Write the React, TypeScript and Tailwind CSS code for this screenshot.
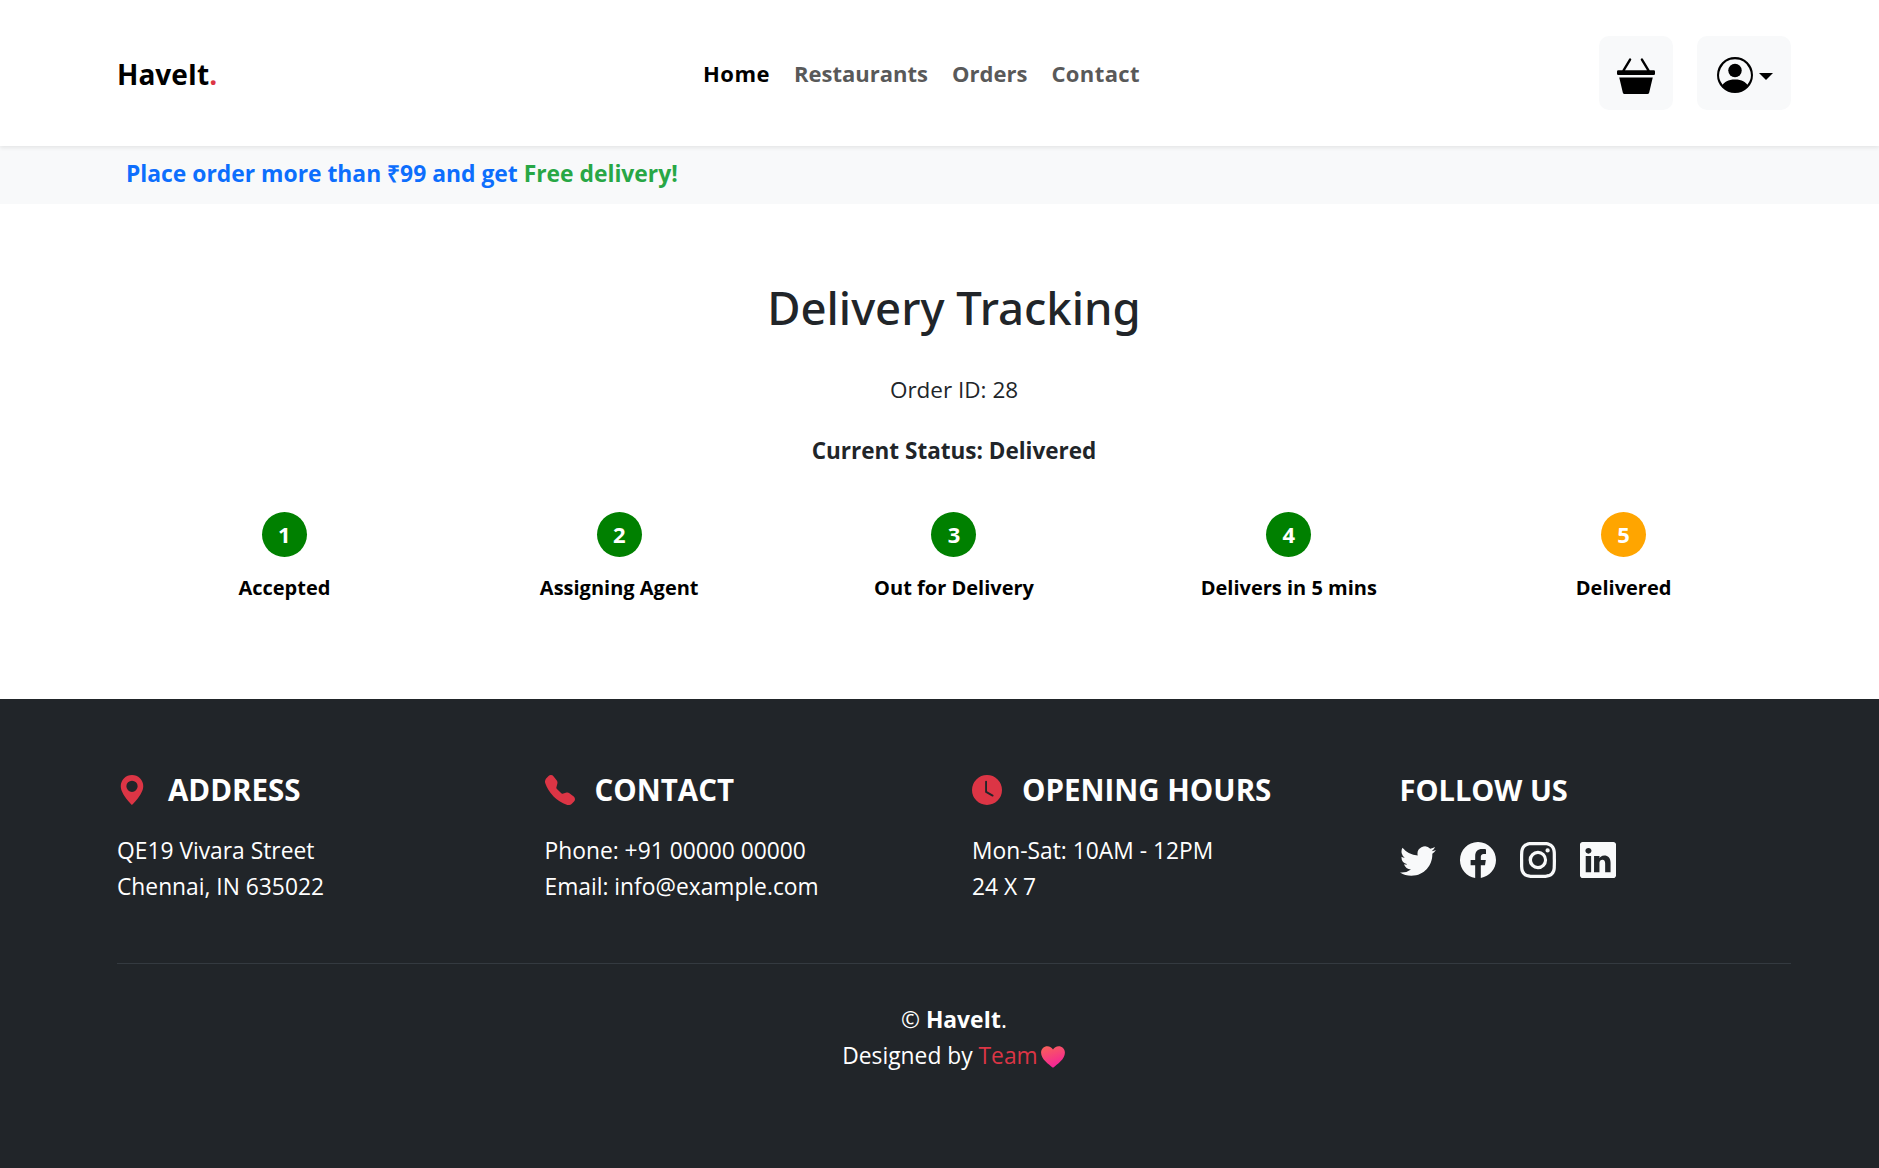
import { BsBasket3Fill, BsPersonCircle, BsGeoAltFill, BsTelephoneFill, BsClockFill, BsTwitter, BsFacebook, BsInstagram, BsLinkedin } from "react-icons/bs";

const steps = [
  { n: 1, label: "Accepted", done: true },
  { n: 2, label: "Assigning Agent", done: true },
  { n: 3, label: "Out for Delivery", done: true },
  { n: 4, label: "Delivers in 5 mins", done: true },
  { n: 5, label: "Delivered", done: false },
];

function Heart() {
  return (
    <svg viewBox="0 0 24 24" className="inline-block w-[26px] h-[26px] align-[-6px] ml-[2px]">
      <defs>
        <linearGradient id="heart" x1="0.2" y1="0" x2="0.6" y2="1">
          <stop offset="0" stopColor="#f8605a" />
          <stop offset="1" stopColor="#f5209a" />
        </linearGradient>
      </defs>
      <path fill="url(#heart)" d="M12 22C8 18.500 1 14 1 8c0-3.600 2.700-6 5.800-6C9 2 11 3.200 12 5c1-1.800 3-3 5.200-3C20.300 2 23 4.400 23 8c0 6-7 10.500-11 14z" />
    </svg>
  );
}

export default function App() {
  return (
    <div className="min-h-[1168px] flex flex-col bg-white font-['Open_Sans',sans-serif] text-[#212529]">
      {/* Navbar */}
      <nav className="h-[146px] pl-[117px] pr-[88px] flex items-center relative z-10 shadow-[0_2px_4px_rgba(0,0,0,0.08)] bg-white">
        <div className="w-[586px] text-[28px] font-bold text-black mt-[2px]">
          HaveIt<span className="text-[#dc3545]">.</span>
        </div>
        <ul className="flex-1 flex gap-[24px] text-[22px] font-bold text-[#595959] mt-[1px]">
          <li className="text-black tracking-[0.5px]">Home</li>
          <li>Restaurants</li>
          <li>Orders</li>
          <li className="tracking-[0.4px]">Contact</li>
        </ul>
        <div className="flex gap-6">
          <button className="w-[74px] h-[74px] rounded-[10px] bg-[#f8f9fa] flex items-center justify-center text-black">
            <BsBasket3Fill size={38} className="mt-[4px]" />
          </button>
          <button className="w-[94px] h-[74px] rounded-[10px] bg-[#f8f9fa] flex items-center justify-center text-black">
            <BsPersonCircle size={36} className="mt-[3px] ml-[1px]" />
            <span className="ml-[6px] mt-[6px] border-t-[7px] border-x-[7px] border-x-transparent border-t-black" />
          </button>
        </div>
      </nav>

      {/* Offer banner */}
      <div className="h-[58px] bg-[#f8f9fa] pl-[126px] pb-[2px] flex items-center text-[22.850px] font-bold text-[#0d6efd]">
        <p>
          Place order more than ₹99 and get <span className="text-[#28a745]">Free delivery!</span>
        </p>
      </div>

      {/* Tracking */}
      <main className="h-[495px] pl-[117px] pr-[88px] flex flex-col items-center">
        <h1 className="mt-[76px] font-['Noto_Sans',sans-serif] text-[45.500px] leading-[55px] font-medium">Delivery Tracking</h1>
        <p className="mt-[37px] text-[22.500px] leading-[36px]">Order ID: 28</p>
        <p className="mt-[25px] text-[22.500px] leading-[36px] font-bold">Current Status: Delivered</p>
        <div className="mt-[43px] w-full grid grid-cols-5">
          {steps.map((step) => (
            <div key={step.n} className="flex flex-col items-center">
              <div className={`w-[45px] h-[45px] rounded-full flex items-center justify-center text-white text-[22px] font-bold ${step.done ? "bg-[#008000]" : "bg-[#ffa500]"}`}>
                {step.n}
              </div>
              <p className="mt-[15px] text-[20px] leading-[32px] font-bold text-black">{step.label}</p>
            </div>
          ))}
        </div>
      </main>

      {/* Footer */}
      <footer className="flex-1 bg-[#212529] text-white pl-[117px] pr-[88px] pt-[73px]">
        <div className="grid grid-cols-[repeat(4,427.500px)] h-[192px] border-b border-[#343a40]">
          <div>
            <h4 className="flex items-center text-[29.500px] leading-[36px] font-bold">
              <BsGeoAltFill className="text-[#dc3545] mr-[21px]" size={30} />
              ADDRESS
            </h4>
            <p className="mt-[25px] text-[22.800px] leading-[36px]">QE19 Vivara Street<br />Chennai, IN 635022</p>
          </div>
          <div>
            <h4 className="flex items-center text-[29.500px] leading-[36px] font-bold">
              <BsTelephoneFill className="text-[#dc3545] mr-[20px]" size={30} />
              CONTACT
            </h4>
            <p className="mt-[25px] text-[22.800px] leading-[36px]">Phone: +91 00000 00000<br />Email: info@example.com</p>
          </div>
          <div>
            <h4 className="flex items-center text-[29.500px] leading-[36px] font-bold">
              <BsClockFill className="text-[#dc3545] mr-[20px]" size={30} />
              OPENING HOURS
            </h4>
            <p className="mt-[25px] text-[22.800px] leading-[36px]">Mon-Sat: 10AM - 12PM<br />24 X 7</p>
          </div>
          <div>
            <h4 className="text-[29px] leading-[36px] font-bold">FOLLOW US</h4>
            <div className="mt-[34px] flex gap-[24px] text-[#f8f9fa]">
              <BsTwitter size={36} />
              <BsFacebook size={36} />
              <BsInstagram size={36} />
              <BsLinkedin size={36} />
            </div>
          </div>
        </div>
        <div className="mt-[38px] text-center text-[22.800px] leading-[36px]">
          <p>© <b>HaveIt</b>.</p>
          <p>Designed by <span className="text-[#dc3545]">Team</span><Heart /></p>
        </div>
      </footer>
    </div>
  );
}
